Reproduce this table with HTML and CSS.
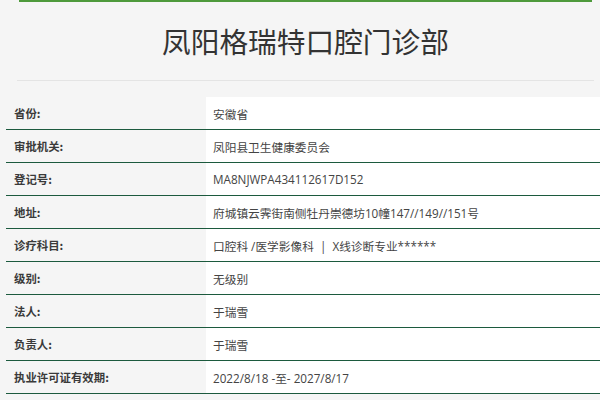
FILE: index.html
```html
<!DOCTYPE html>
<html lang="zh-CN">
<head>
<meta charset="utf-8">
<title>凤阳格瑞特口腔门诊部</title>
<link rel="stylesheet" href="styles.css">
</head>
<body>
<div class="header">
  <h1 class="title">凤阳格瑞特口腔门诊部</h1>
</div>
<div class="info">
  <div class="row"><div class="label">省份:</div><div class="value">安徽省</div></div>
  <div class="row"><div class="label">审批机关:</div><div class="value">凤阳县卫生健康委员会</div></div>
  <div class="row"><div class="label">登记号:</div><div class="value">MA8NJWPA434112617D152</div></div>
  <div class="row"><div class="label">地址:</div><div class="value">府城镇云霁街南侧牡丹崇德坊10幢147//149//151号</div></div>
  <div class="row"><div class="label">诊疗科目:</div><div class="value">口腔科 /医学影像科 &nbsp;|&nbsp; X线诊断专业******</div></div>
  <div class="row"><div class="label">级别:</div><div class="value">无级别</div></div>
  <div class="row"><div class="label">法人:</div><div class="value">于瑞雪</div></div>
  <div class="row"><div class="label">负责人:</div><div class="value">于瑞雪</div></div>
  <div class="row"><div class="label">执业许可证有效期:</div><div class="value">2022/8/18 -至- 2027/8/17</div></div>
</div>
</body>
</html>
```
FILE: styles.css
```css
html, body {
  margin: 0;
  padding: 0;
  background: #f5f5f5;
  font-family: "Open Sans", "Noto Sans CJK SC", sans-serif;
  color: #333;
}
.header {
  margin: 0 8px 0 19px;
  border-top: 2px solid #4e9a3c;
}
.title {
  margin: 0 -2px 0 -2px;
  height: 78px;
  border-bottom: 1px solid #e4e4e4;
  font-family: "Noto Sans CJK SC", sans-serif;
  font-weight: 400;
  font-size: 28.7px;
  line-height: 78px;
  text-align: center;
  color: #333;
}
.info {
  margin: 16px 0 0 6px;
}
.row {
  display: grid;
  grid-template-columns: 200px 1fr;
  height: 32px;
  border-bottom: 1px solid #1c5a3e;
}
.label {
  padding-left: 8px;
  display: flex;
  align-items: center;
  font-family: "Noto Sans CJK SC", sans-serif;
  font-weight: 700;
  font-size: 11.4px;
  color: #3a3a3a;
  background: #f5f5f5;
}
.value {
  padding-left: 7px;
  display: flex;
  align-items: center;
  font-size: 11.7px;
  color: #444;
  background: #fff;
  white-space: pre;
}
```
